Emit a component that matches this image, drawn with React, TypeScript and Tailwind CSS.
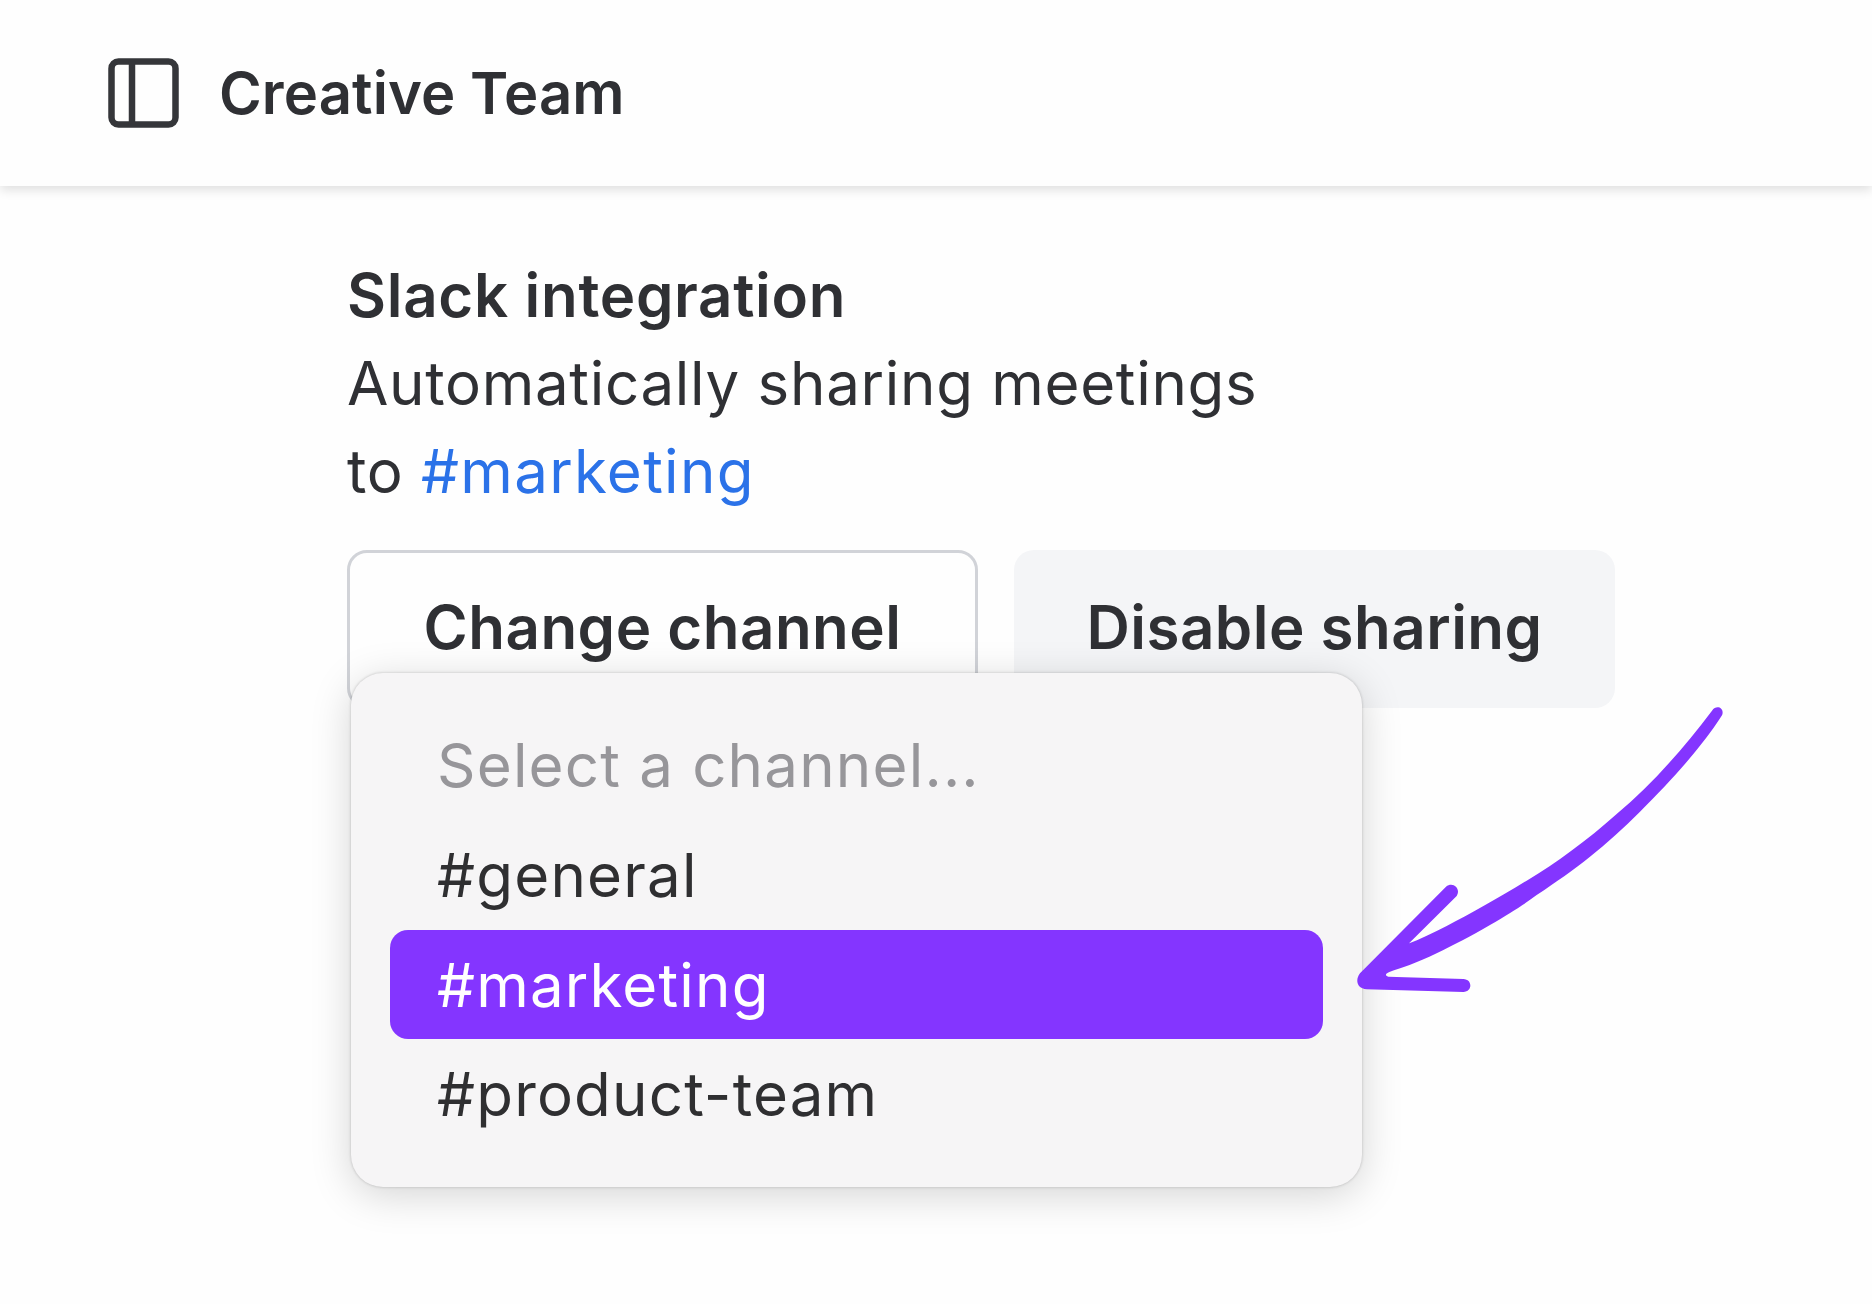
const font = 'font-["Inter","Liberation_Sans",sans-serif]'

function SidebarIcon() {
  return (
    <svg width="71" height="70" viewBox="0 0 71 70" fill="none" stroke="#35363a" strokeWidth="6.5">
      <rect x="3.5" y="3.5" width="64" height="63" rx="7" />
      <path d="M24 3.5V66.5" />
    </svg>
  )
}

function Arrow() {
  return (
    <svg width="460" height="340" viewBox="0 0 1380 1020" className="absolute left-[1300px] top-[680px]">
      <path
        fill="#8435ff"
        d="M1236 92 C1150 205 1055 315 950 402 C860 482 770 548 680 602 C590 657 510 702 440 738 C400 758 360 778 322 792 C310 798 310 812 322 810 L322 795 L470 648 C484 625 458 603 438 620 L180 880 C165 900 170 925 200 928 L490 936 C518 935 518 898 490 897 L265 890 C252 885 258 880 270 875 C300 865 350 850 410 820 C460 795 510 770 570 735 C630 700 670 675 710 645 C770 605 820 570 870 530 C920 490 970 445 1020 395 C1080 335 1130 283 1180 222 C1215 180 1245 140 1266 106 C1275 85 1250 72 1236 92 Z"
      />
    </svg>
  )
}

export default function App() {
  const channels = ['#general', '#marketing', '#product-team']

  return (
    <div className={`relative h-[1304px] w-full overflow-hidden bg-[#fefefe] text-[#2f3034] ${font}`}>
      {/* Header */}
      <header className="flex h-[186px] items-center gap-[40px] pl-[108px] shadow-[0_4px_10px_rgba(0,0,0,0.12)]">
        <SidebarIcon />
        <span className="text-[58px] font-semibold leading-none tracking-[0.1px]">Creative Team</span>
      </header>

      {/* Integration section */}
      <main className="pl-[347px] pt-[65px]">
        <h2 className="text-[60px] font-semibold leading-[88px] tracking-[0.7px]">Slack integration</h2>
        <p className="w-[1100px] text-[60px] leading-[88px] tracking-[0.7px]">
          Automatically sharing meetings
          <br />
          to <span className="text-[#2b72e8] tracking-[1.3px]">#marketing</span>
        </p>

        <div className="relative mt-[35px] flex gap-[36px]">
          <button className="h-[158px] w-[631px] rounded-[20px] border-[3px] border-[#d1d3d8] pb-[4px] text-[60px] font-semibold tracking-[0.5px]">
            Change channel
          </button>
          <button className="h-[158px] w-[601px] rounded-[20px] bg-[#f4f5f7] pb-[4px] text-[60px] font-semibold tracking-[0.5px]">
            Disable sharing
          </button>

          {/* Channel menu */}
          <div className="absolute left-[4px] top-[123px] w-[1011px] rounded-[32px] bg-[#f6f5f6] px-[39px] pb-[38px] pt-[37px] text-[60px] tracking-[1.2px] shadow-[0_0_3px_rgba(0,0,0,0.22),0_8px_40px_rgba(0,0,0,0.17)]">
            <div className="flex h-[110px] items-center pl-[47px] text-[#97969a]">Select a channel...</div>
            {channels.map((channel) => (
              <div
                key={channel}
                className={
                  channel === '#marketing'
                    ? 'flex h-[109px] items-center rounded-[18px] bg-[#8435ff] pl-[47px] text-white'
                    : 'flex h-[110px] items-center pl-[47px] text-[#2f2f31]'
                }
              >
                {channel}
              </div>
            ))}
          </div>
        </div>
      </main>

      <Arrow />
    </div>
  )
}
